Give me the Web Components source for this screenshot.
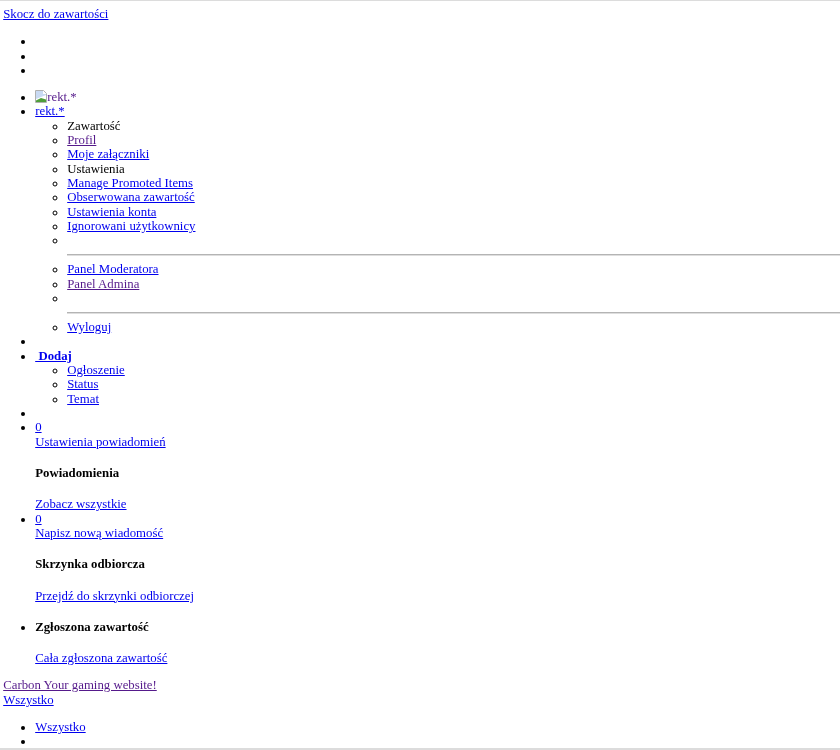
<!DOCTYPE html>
<html lang="pl">
<head>
<meta charset="utf-8">
<title>Carbon</title>
<style>
    html, body {
        margin: 0;
        padding: 0;
        background: #fff;
    }
    body {
        font: 12.8px/14.33px "Liberation Serif", "Times New Roman", serif;
        color: #000;
    }
</style>
</head>
<body>
<site-page></site-page>

<template id="tree-link">
    <style>
        a { color: #0000ee; text-decoration: underline; }
        :host([visited]) a { color: #551a8b; }
        :host([bold]) a { font-weight: bold; }
        :host([plain]) a { text-decoration: none; }
    </style>
    <a href="#"><slot></slot></a>
</template>

<template id="menu-list">
    <style>
        :host { display: block; }
        ul {
            margin: 0;
            padding: 0 0 0 32px;
            list-style: disc;
        }
        :host([spaced]) ul { margin: 12.8px 0; }
        :host([nested]) ul { list-style: circle; }
    </style>
    <ul><slot></slot></ul>
</template>

<template id="menu-item">
    <style>
        :host { display: list-item; min-height: 14.33px; }
    </style>
    <slot></slot>
</template>

<template id="menu-rule">
    <style>
        hr {
            margin: 6.33px 0;
            border: 0;
            border-top: 1px solid #b4b4b4;
            border-bottom: 1px solid #dedede;
        }
    </style>
    &nbsp;<hr>
</template>

<template id="panel-title">
    <style>
        :host {
            display: block;
            margin: 17px 0;
            font-weight: bold;
        }
    </style>
    <slot></slot>
</template>

<template id="broken-image">
    <style>
        :host { display: inline-block; vertical-align: -2px; }
        svg { display: block; }
    </style>
    <svg width="12" height="13" viewBox="0 0 12 13">
        <path d="M.5.5h8l3 3v9H.5z" fill="#fff" stroke="#b0b0b0"/>
        <path d="M1 1h7v3h3v1L1 9z" fill="#c9daf3"/>
        <path d="M1 12v-1.500L6 8l5 1.500V12z" fill="#4f9e3a"/>
    </svg>
</template>

<template id="site-page">
    <style>
        :host {
            display: block;
            position: relative;
            height: 750px;
            overflow: hidden;
            box-sizing: border-box;
            border-top: 1px solid #dcdcdc;
            padding: 6.2px 0 0 3.2px;
            filter: blur(0.4px);
        }
        .bottom-bar {
            position: absolute;
            left: 0;
            right: 0;
            bottom: 0;
            height: 2px;
            background: #dcdcdc;
        }
    </style>
    <tree-link>Skocz do zawartości</tree-link>

    <menu-list spaced>
        <menu-item></menu-item>
        <menu-item></menu-item>
        <menu-item></menu-item>
    </menu-list>

    <menu-list spaced>
        <menu-item><tree-link visited plain><broken-image></broken-image>rekt.*</tree-link></menu-item>
        <menu-item>
            <tree-link>rekt.*</tree-link>
            <menu-list nested>
                <menu-item>Zawartość</menu-item>
                <menu-item><tree-link visited>Profil</tree-link></menu-item>
                <menu-item><tree-link>Moje załączniki</tree-link></menu-item>
                <menu-item>Ustawienia</menu-item>
                <menu-item><tree-link>Manage Promoted Items</tree-link></menu-item>
                <menu-item><tree-link>Obserwowana zawartość</tree-link></menu-item>
                <menu-item><tree-link>Ustawienia konta</tree-link></menu-item>
                <menu-item><tree-link>Ignorowani użytkownicy</tree-link></menu-item>
                <menu-item><menu-rule></menu-rule></menu-item>
                <menu-item><tree-link>Panel Moderatora</tree-link></menu-item>
                <menu-item><tree-link visited>Panel Admina</tree-link></menu-item>
                <menu-item><menu-rule></menu-rule></menu-item>
                <menu-item><tree-link>Wyloguj</tree-link></menu-item>
            </menu-list>
        </menu-item>
        <menu-item></menu-item>
        <menu-item>
            <tree-link bold>&nbsp;Dodaj</tree-link>
            <menu-list nested>
                <menu-item><tree-link>Ogłoszenie</tree-link></menu-item>
                <menu-item><tree-link>Status</tree-link></menu-item>
                <menu-item><tree-link>Temat</tree-link></menu-item>
            </menu-list>
        </menu-item>
        <menu-item></menu-item>
        <menu-item>
            <tree-link>0</tree-link><br>
            <tree-link>Ustawienia powiadomień</tree-link>
            <panel-title>Powiadomienia</panel-title>
            <tree-link>Zobacz wszystkie</tree-link>
        </menu-item>
        <menu-item>
            <tree-link>0</tree-link><br>
            <tree-link>Napisz nową wiadomość</tree-link>
            <panel-title>Skrzynka odbiorcza</panel-title>
            <tree-link>Przejdź do skrzynki odbiorczej</tree-link>
        </menu-item>
        <menu-item>
            <panel-title>Zgłoszona zawartość</panel-title>
            <tree-link>Cała zgłoszona zawartość</tree-link>
        </menu-item>
    </menu-list>

    <div><tree-link visited>Carbon Your gaming website!</tree-link></div>
    <div><tree-link>Wszystko</tree-link></div>

    <menu-list spaced>
        <menu-item><tree-link>Wszystko</tree-link></menu-item>
        <menu-item></menu-item>
    </menu-list>
    <div class="bottom-bar"></div>
</template>

<script>
    // Every element just clones its template into an open shadow root
    function defineFromTemplate(tagName) {
        customElements.define(tagName, class extends HTMLElement {
            constructor() {
                super();
                const template = document.getElementById(tagName);
                this.attachShadow({ mode: 'open' });
                this.shadowRoot.appendChild(template.content.cloneNode(true));
            }
        });
    }

    ['tree-link', 'menu-list', 'menu-item', 'menu-rule', 'panel-title', 'broken-image', 'site-page']
        .forEach(defineFromTemplate);
</script>
</body>
</html>
